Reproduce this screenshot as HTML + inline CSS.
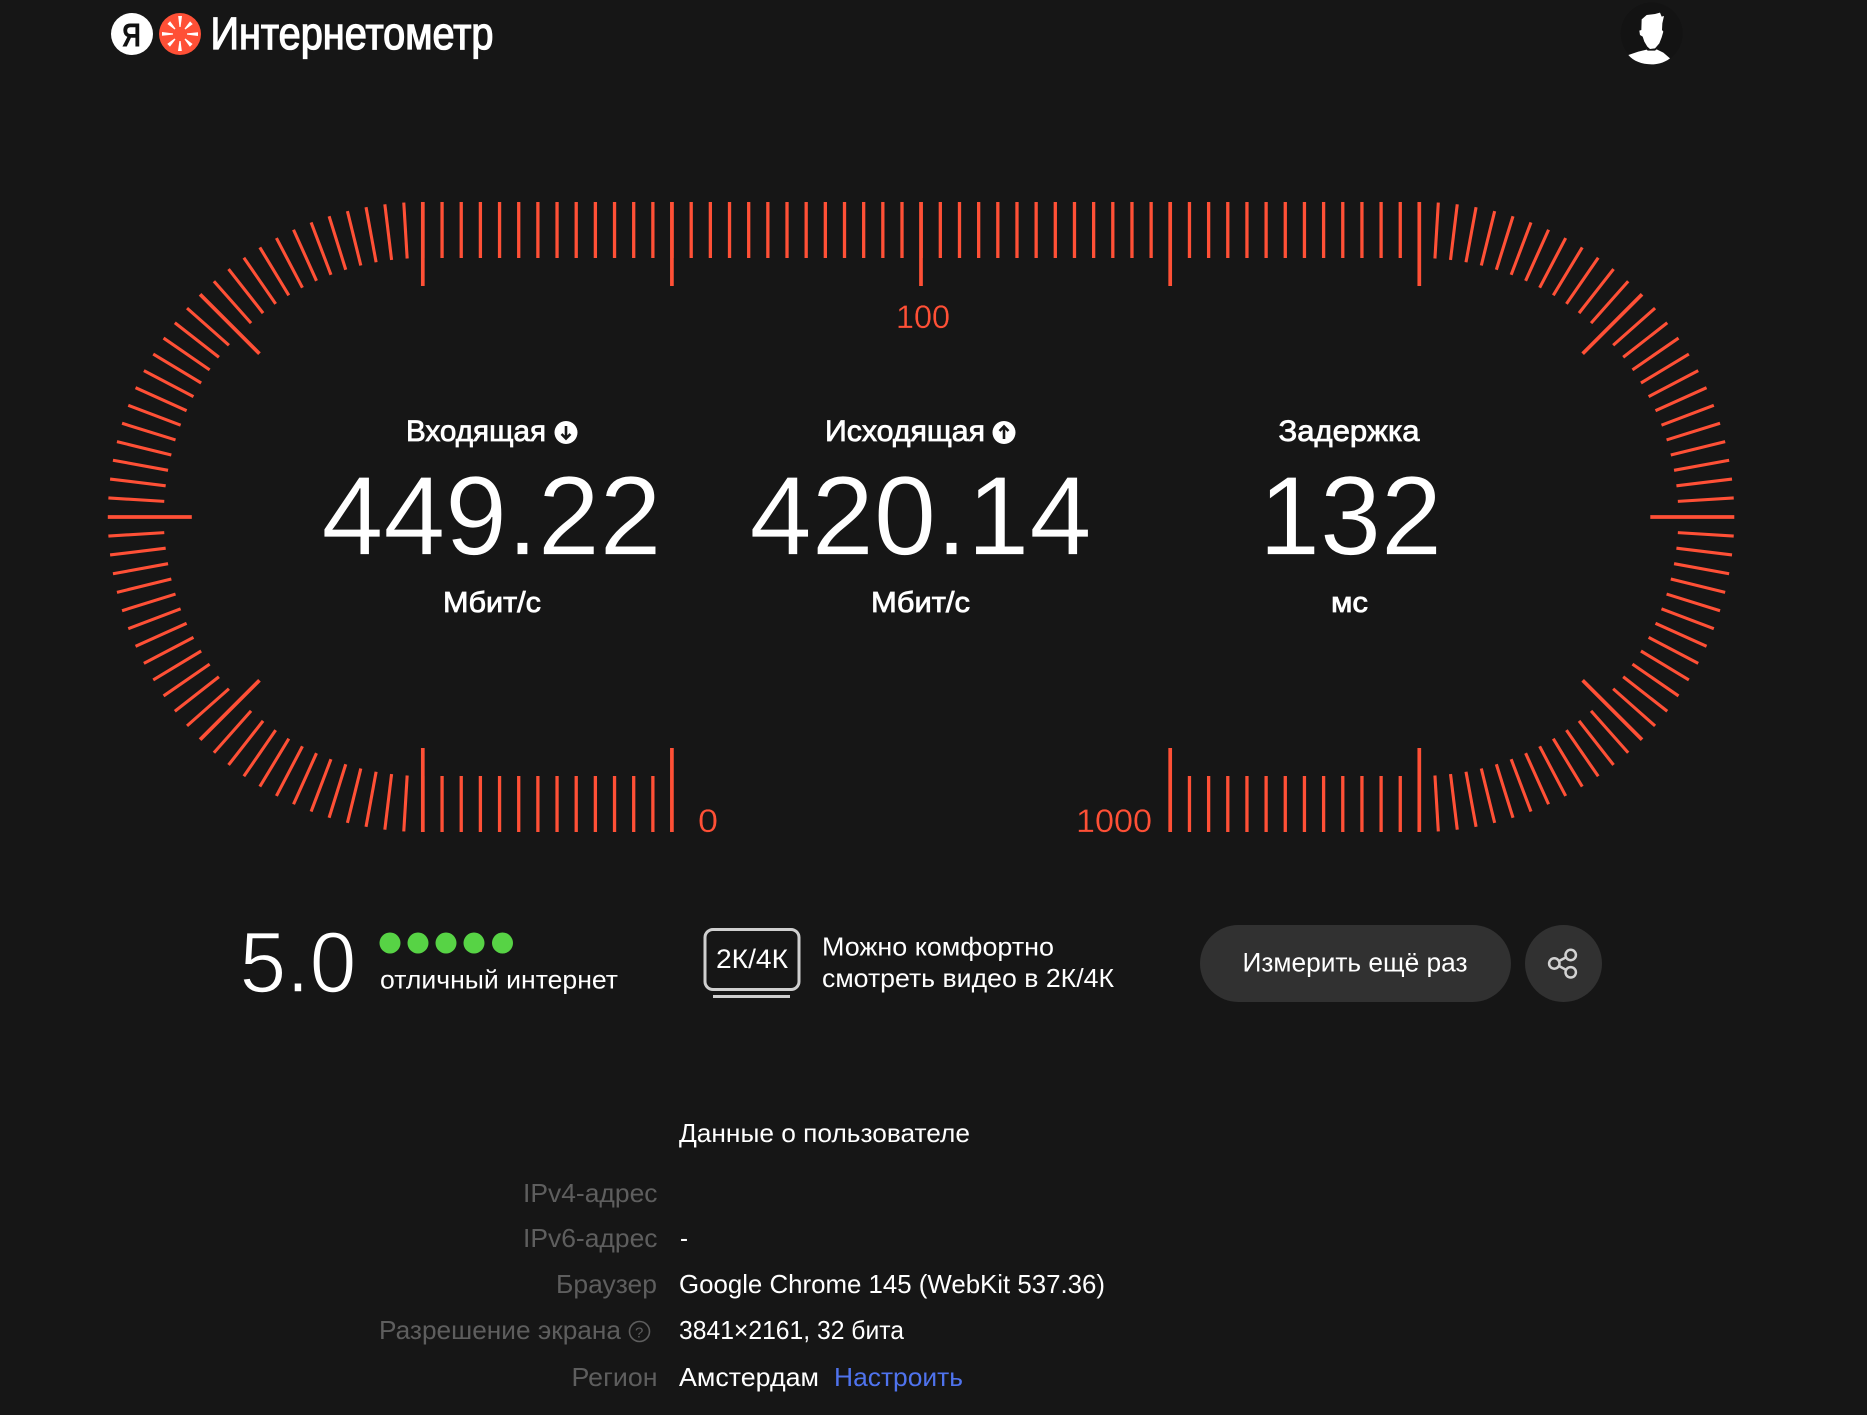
<!DOCTYPE html>
<html lang="ru"><head><meta charset="utf-8"><title>Интернетометр</title>
<style>
html,body{margin:0;padding:0;background:#161616;width:1867px;height:1415px;overflow:hidden}
svg{display:block}
text{font-family:"Liberation Sans",sans-serif;fill:#fff;font-size:26px}
.m{stroke:#fff;stroke-width:.8px}
.b{font-weight:700}
.big{font-size:112px;stroke:#161616;stroke-width:.8px}
.lab{fill:#5e5e5e}
.o{fill:#ff5036;font-size:32px;stroke:#161616;stroke-width:.3px}
.ticks line{stroke:#ff5036;stroke-width:3.1}
.ticks line.l{stroke-width:3.7}
</style></head><body>
<svg width="1867" height="1415" viewBox="0 0 1867 1415" xmlns="http://www.w3.org/2000/svg">
<rect width="1867" height="1415" fill="#161616"/>
<defs>
<g id="arc" class="ticks">
<line class="l" x1="-315" x2="-231" transform="rotate(-90)"/>
<line x1="-315" x2="-259" transform="rotate(-86.5385)"/><line x1="-315" x2="-259" transform="rotate(-83.0769)"/><line x1="-315" x2="-259" transform="rotate(-79.6154)"/><line x1="-315" x2="-259" transform="rotate(-76.1538)"/><line x1="-315" x2="-259" transform="rotate(-72.6923)"/><line x1="-315" x2="-259" transform="rotate(-69.2308)"/><line x1="-315" x2="-259" transform="rotate(-65.7692)"/><line x1="-315" x2="-259" transform="rotate(-62.3077)"/><line x1="-315" x2="-259" transform="rotate(-58.8462)"/><line x1="-315" x2="-259" transform="rotate(-55.3846)"/><line x1="-315" x2="-259" transform="rotate(-51.9231)"/><line x1="-315" x2="-259" transform="rotate(-48.4615)"/>
<line class="l" x1="-315" x2="-231" transform="rotate(-45)"/>
<line x1="-315" x2="-259" transform="rotate(-41.5385)"/><line x1="-315" x2="-259" transform="rotate(-38.0769)"/><line x1="-315" x2="-259" transform="rotate(-34.6154)"/><line x1="-315" x2="-259" transform="rotate(-31.1538)"/><line x1="-315" x2="-259" transform="rotate(-27.6923)"/><line x1="-315" x2="-259" transform="rotate(-24.2308)"/><line x1="-315" x2="-259" transform="rotate(-20.7692)"/><line x1="-315" x2="-259" transform="rotate(-17.3077)"/><line x1="-315" x2="-259" transform="rotate(-13.8462)"/><line x1="-315" x2="-259" transform="rotate(-10.3846)"/><line x1="-315" x2="-259" transform="rotate(-6.9231)"/><line x1="-315" x2="-259" transform="rotate(-3.4615)"/>
<line class="l" x1="-315" x2="-231"/>
<line x1="-315" x2="-259" transform="rotate(3.4615)"/><line x1="-315" x2="-259" transform="rotate(6.9231)"/><line x1="-315" x2="-259" transform="rotate(10.3846)"/><line x1="-315" x2="-259" transform="rotate(13.8462)"/><line x1="-315" x2="-259" transform="rotate(17.3077)"/><line x1="-315" x2="-259" transform="rotate(20.7692)"/><line x1="-315" x2="-259" transform="rotate(24.2308)"/><line x1="-315" x2="-259" transform="rotate(27.6923)"/><line x1="-315" x2="-259" transform="rotate(31.1538)"/><line x1="-315" x2="-259" transform="rotate(34.6154)"/><line x1="-315" x2="-259" transform="rotate(38.0769)"/><line x1="-315" x2="-259" transform="rotate(41.5385)"/>
<line class="l" x1="-315" x2="-231" transform="rotate(45)"/>
<line x1="-315" x2="-259" transform="rotate(48.4615)"/><line x1="-315" x2="-259" transform="rotate(51.9231)"/><line x1="-315" x2="-259" transform="rotate(55.3846)"/><line x1="-315" x2="-259" transform="rotate(58.8462)"/><line x1="-315" x2="-259" transform="rotate(62.3077)"/><line x1="-315" x2="-259" transform="rotate(65.7692)"/><line x1="-315" x2="-259" transform="rotate(69.2308)"/><line x1="-315" x2="-259" transform="rotate(72.6923)"/><line x1="-315" x2="-259" transform="rotate(76.1538)"/><line x1="-315" x2="-259" transform="rotate(79.6154)"/><line x1="-315" x2="-259" transform="rotate(83.0769)"/><line x1="-315" x2="-259" transform="rotate(86.5385)"/>
<line class="l" x1="-315" x2="-231" transform="rotate(90)"/>
</g>
</defs>

<!-- header -->
<circle cx="132" cy="34" r="21" fill="#fff"/>
<text x="122" y="46.500" class="b" style="font-size:33px;fill:#111" textLength="19" lengthAdjust="spacingAndGlyphs">Я</text>
<circle cx="180" cy="34" r="21" fill="#ff5036"/>
<g transform="translate(180 34)" fill="#fff">
<polygon points="-.6,-7 .6,-7 2,-18 -1.800,-18"/>
<polygon points="-.6,-7 .6,-7 2,-16 -1.800,-16" transform="rotate(45)"/>
<polygon points="-.6,-7 .6,-7 2,-18 -1.800,-18" transform="rotate(90)"/>
<polygon points="-.6,-7 .6,-7 2,-16 -1.800,-16" transform="rotate(135)"/>
<polygon points="-.6,-7 .6,-7 2,-17 -1.800,-17" transform="rotate(180)"/>
<polygon points="-.6,-7 .6,-7 2,-16 -1.800,-16" transform="rotate(225)"/>
<polygon points="-.6,-7 .6,-7 2,-18 -1.800,-18" transform="rotate(270)"/>
<polygon points="-.6,-7 .6,-7 2,-16 -1.800,-16" transform="rotate(315)"/>
</g>
<text x="210.500" y="49" style="font-size:45px;stroke:#fff;stroke-width:1.300px" textLength="283" lengthAdjust="spacingAndGlyphs">Интернетометр</text>

<circle cx="1651.700" cy="33.500" r="31" fill="#131313"/>
<g transform="translate(1600 0) scale(.33333)" fill="#fff">
<path d="M125 58L140 45L165 42L180 38L185 50L192 48L187 70L186 90L190 95L185 112L178 130L165 145L150 147L142 140L133 125L128 110L120 105L118 92L124 90Z"/>
<path d="M85 165L115 155L140 149L143 152L165 152L170 148L190 158L210 175C190 190 170 193 155 193C125 193 100 183 85 165Z"/>
</g>

<!-- gauge -->
<use href="#arc" transform="translate(422.800 517)"/>
<use href="#arc" transform="translate(1419.300 517) scale(-1 1)"/>
<g class="ticks">
<line x1="421.250" y1="230" x2="1420" y2="230" style="stroke-width:56;stroke-dasharray:3.300 15.864"/>
<line x1="421.250" y1="804" x2="671" y2="804" style="stroke-width:56;stroke-dasharray:3.300 15.864"/>
<line x1="1168.650" y1="804" x2="1420" y2="804" style="stroke-width:56;stroke-dasharray:3.300 15.864"/>
<line class="l" x1="671.900" x2="671.900" y1="202" y2="286"/>
<line class="l" x1="921" x2="921" y1="202" y2="286"/>
<line class="l" x1="1170.200" x2="1170.200" y1="202" y2="286"/>
<line class="l" x1="671.900" x2="671.900" y1="748" y2="832"/>
<line class="l" x1="1170.200" x2="1170.200" y1="748" y2="832"/>
</g>
<text x="896" y="328" class="o" textLength="54" lengthAdjust="spacingAndGlyphs">100</text>
<text x="698" y="832" class="o" textLength="20" lengthAdjust="spacingAndGlyphs">0</text>
<text x="1076" y="832" class="o" textLength="76" lengthAdjust="spacingAndGlyphs">1000</text>

<!-- stats -->
<text x="406" y="441" class="m" style="font-size:30px" textLength="140" lengthAdjust="spacingAndGlyphs">Входящая</text>
<circle cx="566" cy="432.500" r="11.500" fill="#fff"/>
<path d="M566 426V438M561.500 434L566 438.500L570.500 434" stroke="#161616" stroke-width="2.600" fill="none"/>
<text x="825" y="441" class="m" style="font-size:30px" textLength="160" lengthAdjust="spacingAndGlyphs">Исходящая</text>
<circle cx="1004" cy="432.500" r="11.500" fill="#fff"/>
<path d="M1004 439V427M999.500 431L1004 426.500L1008.500 431" stroke="#161616" stroke-width="2.600" fill="none"/>
<text x="1278.500" y="441" class="m" style="font-size:30px" textLength="141" lengthAdjust="spacingAndGlyphs">Задержка</text>

<text x="321.500" y="554.500" class="big" textLength="340" lengthAdjust="spacingAndGlyphs">449.22</text>
<text x="749.500" y="554.500" class="big" textLength="342" lengthAdjust="spacingAndGlyphs">420.14</text>
<text x="1259" y="554.500" class="big" textLength="183" lengthAdjust="spacingAndGlyphs">132</text>

<text x="443" y="612" class="m" style="font-size:29px" textLength="98" lengthAdjust="spacingAndGlyphs">Мбит/с</text>
<text x="871" y="612" class="m" style="font-size:29px" textLength="99" lengthAdjust="spacingAndGlyphs">Мбит/с</text>
<text x="1331" y="612" class="m" style="font-size:29px" textLength="37" lengthAdjust="spacingAndGlyphs">мс</text>

<!-- rating -->
<text x="239.500" y="992" style="font-size:86px;stroke:#161616;stroke-width:1.600px" textLength="117" lengthAdjust="spacingAndGlyphs">5.0</text>
<g fill="#57d345"><circle cx="390" cy="943" r="10.500"/><circle cx="418" cy="943" r="10.500"/><circle cx="446" cy="943" r="10.500"/><circle cx="474" cy="943" r="10.500"/><circle cx="502.500" cy="943" r="10.500"/></g>
<text x="380" y="988.500" textLength="238" lengthAdjust="spacingAndGlyphs">отличный интернет</text>

<rect x="705" y="929.500" width="94" height="60" rx="8" fill="none" stroke="#cfcfcf" stroke-width="3"/>
<rect x="713" y="995" width="77" height="3" fill="#cfcfcf"/>
<text x="716" y="968" style="font-size:27px" textLength="72" lengthAdjust="spacingAndGlyphs">2К/4К</text>
<text x="822" y="955.500" textLength="232" lengthAdjust="spacingAndGlyphs">Можно комфортно</text>
<text x="822" y="987" textLength="292" lengthAdjust="spacingAndGlyphs">смотреть видео в 2К/4К</text>

<rect x="1200" y="925" width="311" height="77" rx="38.500" fill="#313131"/>
<text x="1242.500" y="971.500" style="font-size:27px" textLength="225" lengthAdjust="spacingAndGlyphs">Измерить ещё раз</text>
<circle cx="1563.500" cy="963.500" r="38.500" fill="#313131"/>
<g fill="none" stroke="#d2d2d2" stroke-width="2.500">
<circle cx="1570.700" cy="955" r="5.200"/><circle cx="1554.300" cy="963.500" r="5.200"/><circle cx="1570.700" cy="972.300" r="5.200"/>
<path d="M1559 961L1566 957.400M1559 966L1566 969.800"/>
</g>

<!-- data -->
<text x="679" y="1142" textLength="291" lengthAdjust="spacingAndGlyphs">Данные о пользователе</text>
<text x="523" y="1202" class="lab" textLength="134.500" lengthAdjust="spacingAndGlyphs">IPv4-адрес</text>
<text x="523" y="1247" class="lab" textLength="134.500" lengthAdjust="spacingAndGlyphs">IPv6-адрес</text>
<text x="680" y="1247" textLength="8" lengthAdjust="spacingAndGlyphs">-</text>
<text x="556" y="1293" class="lab" textLength="101" lengthAdjust="spacingAndGlyphs">Браузер</text>
<text x="679" y="1293" textLength="426" lengthAdjust="spacingAndGlyphs">Google Chrome 145 (WebKit 537.36)</text>
<text x="379" y="1339" class="lab" textLength="242" lengthAdjust="spacingAndGlyphs">Разрешение экрана</text>
<circle cx="639.500" cy="1331.500" r="10" fill="none" stroke="#5e5e5e" stroke-width="1.600"/>
<text x="635" y="1337.500" class="lab" style="font-size:15px">?</text>
<text x="679" y="1339" textLength="225" lengthAdjust="spacingAndGlyphs">3841×2161, 32 бита</text>
<text x="571.500" y="1386" class="lab" textLength="86" lengthAdjust="spacingAndGlyphs">Регион</text>
<text x="679" y="1386" textLength="140" lengthAdjust="spacingAndGlyphs">Амстердам</text>
<text x="834" y="1386" style="fill:#4f73ed" textLength="129" lengthAdjust="spacingAndGlyphs">Настроить</text>
</svg>
</body></html>
